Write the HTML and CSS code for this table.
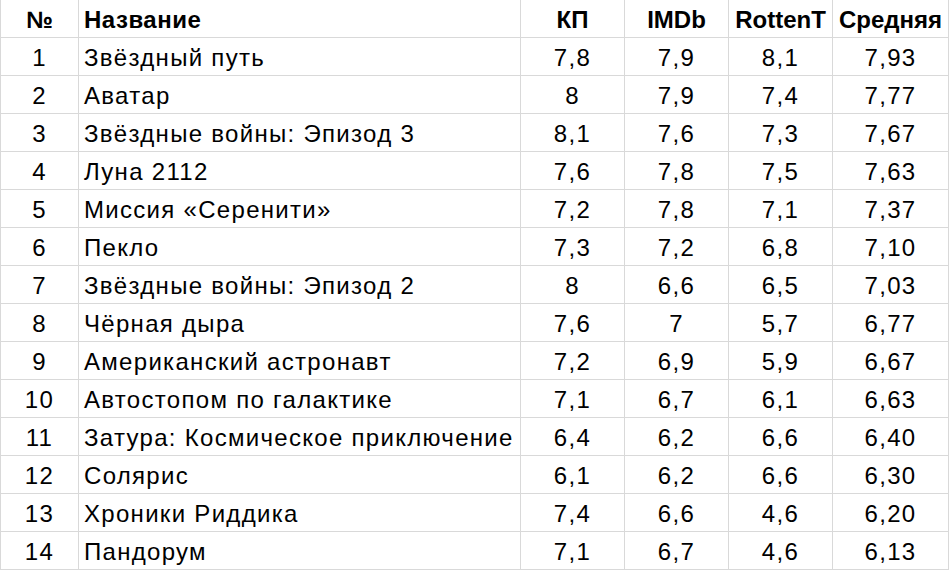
FILE: index.html
```html
<!DOCTYPE html>
<html lang="ru">
<head>
<meta charset="utf-8">
<link rel="stylesheet" href="styles.css">
</head>
<body>
<div class="sheet">
  <div class="c hd">№</div><div class="c hd left">Название</div><div class="c hd">КП</div><div class="c hd">IMDb</div><div class="c hd">RottenT</div><div class="c hd">Средняя</div>
  <div class="c">1</div><div class="c left">Звёздный путь</div><div class="c">7,8</div><div class="c">7,9</div><div class="c">8,1</div><div class="c">7,93</div>
  <div class="c">2</div><div class="c left">Аватар</div><div class="c">8</div><div class="c">7,9</div><div class="c">7,4</div><div class="c">7,77</div>
  <div class="c">3</div><div class="c left">Звёздные войны: Эпизод 3</div><div class="c">8,1</div><div class="c">7,6</div><div class="c">7,3</div><div class="c">7,67</div>
  <div class="c">4</div><div class="c left">Луна 2112</div><div class="c">7,6</div><div class="c">7,8</div><div class="c">7,5</div><div class="c">7,63</div>
  <div class="c">5</div><div class="c left">Миссия «Серенити»</div><div class="c">7,2</div><div class="c">7,8</div><div class="c">7,1</div><div class="c">7,37</div>
  <div class="c">6</div><div class="c left">Пекло</div><div class="c">7,3</div><div class="c">7,2</div><div class="c">6,8</div><div class="c">7,10</div>
  <div class="c">7</div><div class="c left">Звёздные войны: Эпизод 2</div><div class="c">8</div><div class="c">6,6</div><div class="c">6,5</div><div class="c">7,03</div>
  <div class="c">8</div><div class="c left">Чёрная дыра</div><div class="c">7,6</div><div class="c">7</div><div class="c">5,7</div><div class="c">6,77</div>
  <div class="c">9</div><div class="c left">Американский астронавт</div><div class="c">7,2</div><div class="c">6,9</div><div class="c">5,9</div><div class="c">6,67</div>
  <div class="c">10</div><div class="c left">Автостопом по галактике</div><div class="c">7,1</div><div class="c">6,7</div><div class="c">6,1</div><div class="c">6,63</div>
  <div class="c">11</div><div class="c left">Затура: Космическое приключение</div><div class="c">6,4</div><div class="c">6,2</div><div class="c">6,6</div><div class="c">6,40</div>
  <div class="c">12</div><div class="c left">Солярис</div><div class="c">6,1</div><div class="c">6,2</div><div class="c">6,6</div><div class="c">6,30</div>
  <div class="c">13</div><div class="c left">Хроники Риддика</div><div class="c">7,4</div><div class="c">6,6</div><div class="c">4,6</div><div class="c">6,20</div>
  <div class="c">14</div><div class="c left">Пандорум</div><div class="c">7,1</div><div class="c">6,7</div><div class="c">4,6</div><div class="c">6,13</div>
</div>
</body>
</html>
```
FILE: styles.css
```css
html, body {
  margin: 0;
  padding: 0;
  background: #ffffff;
}
.sheet {
  display: grid;
  grid-template-columns: 77px 441px 103px 103px 103px 115px;
  grid-auto-rows: 37px;
  gap: 1px;
  padding: 0 1px 1px 1px;
  background: #d9d9d9;
  width: max-content;
  font-family: "Liberation Sans", Arial, sans-serif;
  font-size: 24px;
  color: #000;
}
.c {
  background: #fff;
  text-align: center;
  padding-top: 3px;
  line-height: 34px;
  white-space: nowrap;
  overflow: hidden;
  letter-spacing: 1.3px;
}
.left {
  text-align: left;
  padding-left: 5px;
}
.hd {
  font-weight: bold;
  letter-spacing: 0;
}
.hd.left {
  letter-spacing: 0.5px;
}
```
